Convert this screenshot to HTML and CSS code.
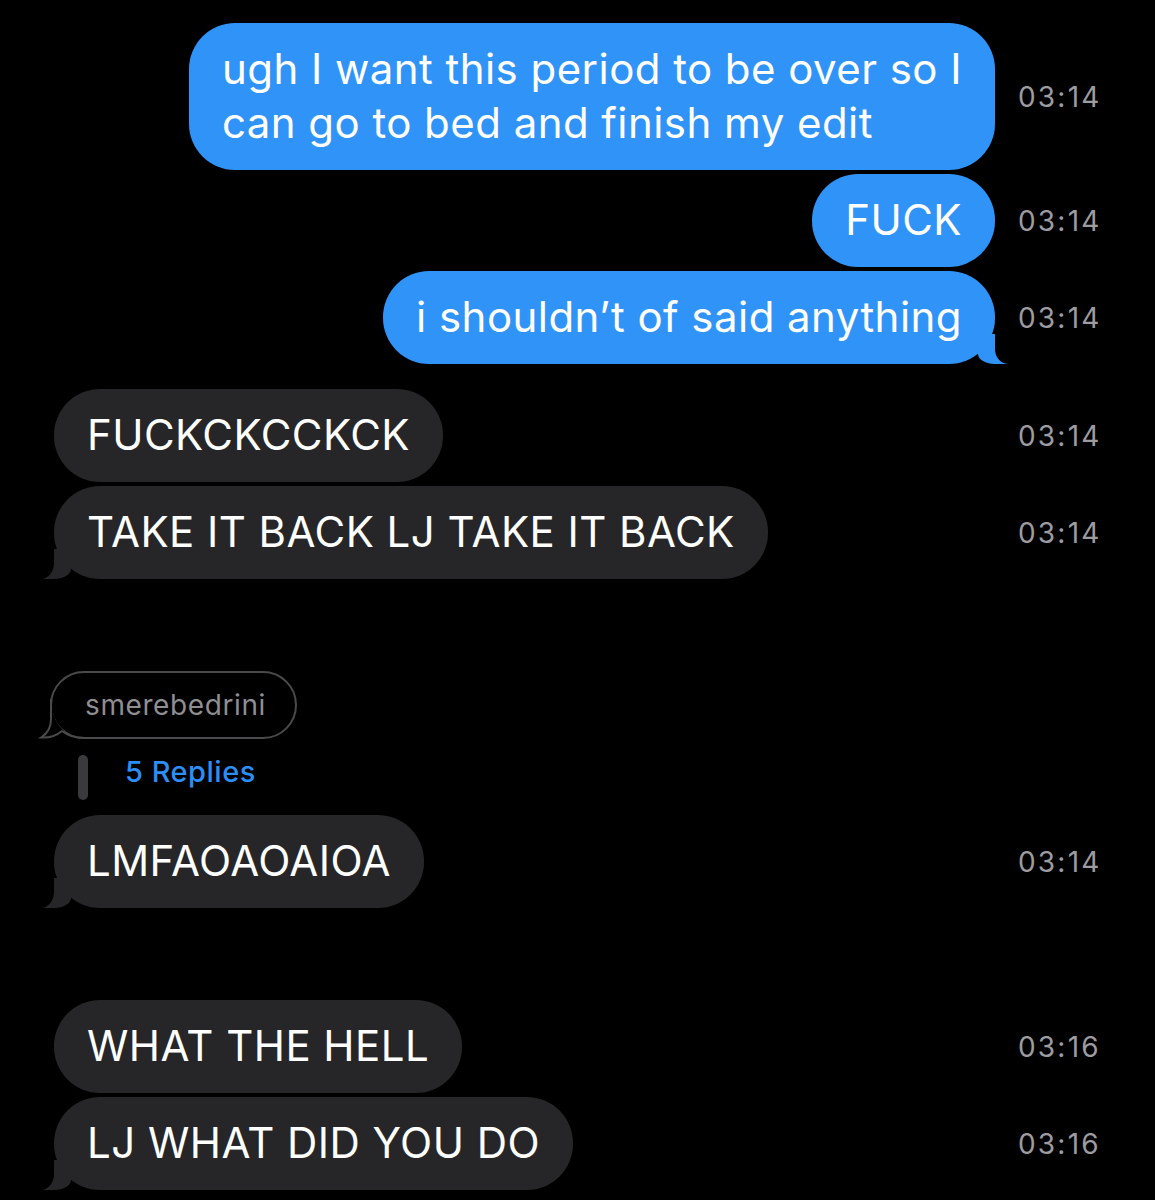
FILE: index.html
```html
<!DOCTYPE html>
<html lang="en">
<head>
    <meta charset="UTF-8">
    <meta name="viewport" content="width=device-width, initial-scale=1.0">
    <title>Messages</title>
    <link rel="stylesheet" href="styles.css">
</head>
<body>
    <div class="thread">
        <div class="row out">
            <div class="bubble">ugh I want this period to be over so I<br>can go to bed and finish my edit</div>
            <span class="time">03:14</span>
        </div>
        <div class="row out">
            <div class="bubble">FUCK</div>
            <span class="time">03:14</span>
        </div>
        <div class="row out">
            <div class="bubble tail">i shouldn’t of said anything</div>
            <span class="time">03:14</span>
        </div>

        <div class="row in group">
            <div class="bubble">FUCKCKCCKCK</div>
            <span class="time">03:14</span>
        </div>
        <div class="row in">
            <div class="bubble tail">TAKE IT BACK LJ TAKE IT BACK</div>
            <span class="time">03:14</span>
        </div>

        <div class="quote-row far">
            <div class="quote">
                smerebedrini
                <svg class="quote-tail" width="50" height="40" viewBox="0 0 50 40">
                    <path d="M13,6 V20 C13,30 9,35 3,38.5 C10,39 18,37 24,32 A34,34 0 0 1 13,6 Z" fill="#000" stroke="#000" stroke-width="3"/>
                    <path d="M13,0 V20 C13,30 9,35 3,38.5 C10,39 18,37 24,32 C29,36 36,39 46,39 H50" fill="none" stroke="#4a4a4c" stroke-width="2"/>
                </svg>
            </div>
        </div>
        <div class="replies">
            <span class="reply-bar"></span>
            <a class="reply-link" href="#">5 Replies</a>
        </div>
        <div class="row in after-replies">
            <div class="bubble tail">LMFAOAOAIOA</div>
            <span class="time">03:14</span>
        </div>

        <div class="row in far">
            <div class="bubble">WHAT THE HELL</div>
            <span class="time">03:16</span>
        </div>
        <div class="row in">
            <div class="bubble tail">LJ WHAT DID YOU DO</div>
            <span class="time">03:16</span>
        </div>
    </div>
</body>
</html>
```

FILE: styles.css
```css
body {
    margin: 0;
    background-color: #000;
    font-family: Inter, "Noto Sans", sans-serif;
    color: #fff;
}
.thread {
    display: flex;
    flex-direction: column;
    gap: 4px;
    padding-top: 23px;
    height: 1200px;
    box-sizing: border-box;
    overflow: hidden;
}
.row {
    display: grid;
    grid-template-columns: 1fr 137px;
    column-gap: 23px;
    align-items: center;
}
.row.group {
    margin-top: 21px;
}
.far {
    margin-top: 88px;
}
.after-replies {
    margin-top: 11px;
}
.bubble {
    position: relative;
    z-index: 0;
    font-size: 42px;
    line-height: 54px;
    letter-spacing: 0.45px;
    padding: 19px 33px 20px;
    border-radius: 46px;
    white-space: nowrap;
}
.out .bubble {
    justify-self: end;
    background-color: #3093f8;
}
.in .bubble {
    justify-self: start;
    margin-left: 54px;
    background-color: #262628;
}
.time {
    font-size: 28px;
    color: #9c9ca1;
    letter-spacing: 2.2px;
}

/* bubble tails */
.bubble.tail::before,
.bubble.tail::after {
    content: "";
    position: absolute;
    bottom: 0;
    z-index: -1;
}
.bubble.tail::before {
    width: 30px;
    height: 30px;
    background: inherit;
}
.bubble.tail::after {
    width: 30px;
    height: 32px;
    background-color: #000;
}
.out .bubble.tail::before {
    right: -13px;
    border-bottom-left-radius: 17px 10px;
}
.out .bubble.tail::after {
    left: 100%;
    border-bottom-left-radius: 13px 15px;
}
.in .bubble.tail::before {
    left: -13px;
    border-bottom-right-radius: 17px 10px;
}
.in .bubble.tail::after {
    right: 100%;
    border-bottom-right-radius: 13px 16px;
}

/* quoted message */
.quote-row {
    display: flex;
}
.quote {
    position: relative;
    margin-left: 50px;
    padding: 15px 29px 15px 33px;
    border: 2px solid #4a4a4c;
    border-radius: 34px;
    font-size: 28px;
    line-height: 34px;
    letter-spacing: 0.6px;
    color: #8e8e93;
}
.quote-tail {
    position: absolute;
    left: -14px;
    bottom: -2px;
}
.replies {
    display: flex;
    align-items: flex-start;
    gap: 37px;
    margin-top: 12px;
    margin-left: 78px;
}
.reply-bar {
    width: 10px;
    height: 45px;
    border-radius: 5px;
    background-color: #3a3a3c;
}
.reply-link {
    font-size: 29px;
    line-height: 34px;
    font-weight: 500;
    letter-spacing: 0.5px;
    color: #2c8ef7;
    text-decoration: none;
}
```
